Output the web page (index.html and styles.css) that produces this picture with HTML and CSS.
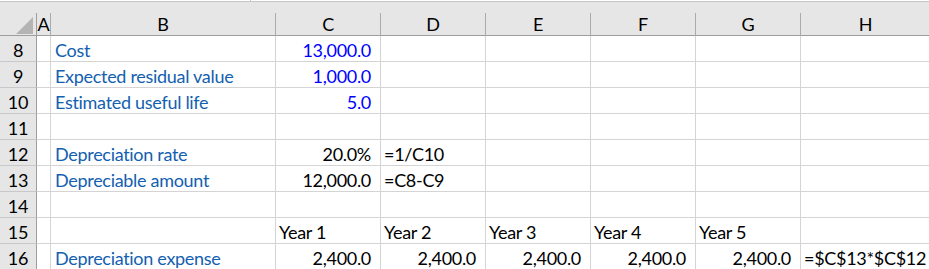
FILE: index.html
```html
<!DOCTYPE html>
<html>
<head>
<meta charset="utf-8">
<link rel="stylesheet" href="styles.css">
</head>
<body>
<div class="sheet">
  <div class="topbar"><div class="fbar"></div></div>
  <div class="grid">
    <div class="corner"><svg width="36" height="23" viewBox="0 0 36 23"><polygon points="16,21 33,4 33,21" fill="#b4b4b4"/></svg></div>
    <div class="ch">A</div><div class="ch">B</div><div class="ch">C</div><div class="ch">D</div><div class="ch">E</div><div class="ch">F</div><div class="ch">G</div><div class="ch last">H</div>

    <div class="rh">8</div><div class="c"></div><div class="c lbl">Cost</div><div class="c num inp">13,000.0</div><div class="c"></div><div class="c"></div><div class="c"></div><div class="c"></div><div class="c last"></div>
    <div class="rh">9</div><div class="c"></div><div class="c lbl">Expected residual value</div><div class="c num inp">1,000.0</div><div class="c"></div><div class="c"></div><div class="c"></div><div class="c"></div><div class="c last"></div>
    <div class="rh">10</div><div class="c"></div><div class="c lbl">Estimated useful life</div><div class="c num inp">5.0</div><div class="c"></div><div class="c"></div><div class="c"></div><div class="c"></div><div class="c last"></div>
    <div class="rh">11</div><div class="c"></div><div class="c"></div><div class="c"></div><div class="c"></div><div class="c"></div><div class="c"></div><div class="c"></div><div class="c last"></div>
    <div class="rh">12</div><div class="c"></div><div class="c lbl">Depreciation rate</div><div class="c num pct">20.0%</div><div class="c txt">=1/C10</div><div class="c"></div><div class="c"></div><div class="c"></div><div class="c last"></div>
    <div class="rh">13</div><div class="c"></div><div class="c lbl">Depreciable amount</div><div class="c num">12,000.0</div><div class="c txt">=C8-C9</div><div class="c"></div><div class="c"></div><div class="c"></div><div class="c last"></div>
    <div class="rh">14</div><div class="c"></div><div class="c"></div><div class="c"></div><div class="c"></div><div class="c"></div><div class="c"></div><div class="c"></div><div class="c last"></div>
    <div class="rh">15</div><div class="c"></div><div class="c"></div><div class="c txt">Year 1</div><div class="c txt">Year 2</div><div class="c txt">Year 3</div><div class="c txt">Year 4</div><div class="c txt">Year 5</div><div class="c last"></div>
    <div class="rh">16</div><div class="c"></div><div class="c lbl">Depreciation expense</div><div class="c num">2,400.0</div><div class="c num">2,400.0</div><div class="c num">2,400.0</div><div class="c num">2,400.0</div><div class="c num">2,400.0</div><div class="c txt last">=$C$13*$C$12</div>
  </div>
</div>
</body>
</html>
```

FILE: styles.css
```css
html, body {
  margin: 0;
  padding: 0;
  background: #ffffff;
  overflow: hidden;
}
.sheet {
  width: 929px;
  height: 269px;
  overflow: hidden;
  font-family: Lato, "Open Sans", sans-serif;
  font-size: 18px;
  letter-spacing: -0.3px;
  color: #000;
}
.topbar {
  height: 12px;
  background: #e6e6e6;
  border-top: 1px solid #c6c6c6;
  box-sizing: border-box;
  margin-top: 1px;
  position: relative;
}
.fbar {
  position: absolute;
  left: 250px;
  right: 0;
  top: -2px;
  height: 1px;
  background: #ffffff;
  border-left: 1px solid #c6c6c6;
}
.grid {
  display: grid;
  grid-template-columns: 37px 14px 225px 105px 105px 105px 105px 105px 129px;
  grid-template-rows: 23px repeat(9, 26px);
}
.grid > div {
  box-sizing: border-box;
  white-space: nowrap;
  overflow: hidden;
}
.corner {
  background: #e6e6e6;
  border-right: 1px solid #9e9e9e;
  border-bottom: 1px solid #9e9e9e;
}
.corner svg { display: block; }
.ch {
  background: #e6e6e6;
  border-right: 1px solid #ababab;
  border-bottom: 1px solid #9e9e9e;
  text-align: center;
  line-height: 23px;
}
.rh {
  background: #e6e6e6;
  border-right: 1px solid #9e9e9e;
  border-bottom: 1px solid #c8c8c8;
  text-align: center;
  line-height: 29px;
}
.c {
  border-right: 1px solid #d4d4d4;
  border-bottom: 1px solid #d4d4d4;
  line-height: 29px;
  padding: 0 4px;
}
.last { border-right: none; }
.lbl { color: #1360b0; }
.num { text-align: right; padding-right: 9px; }
.pct { padding-right: 9px; }
.inp { color: #0000ff; }
.txt { padding-left: 3px; }
```
